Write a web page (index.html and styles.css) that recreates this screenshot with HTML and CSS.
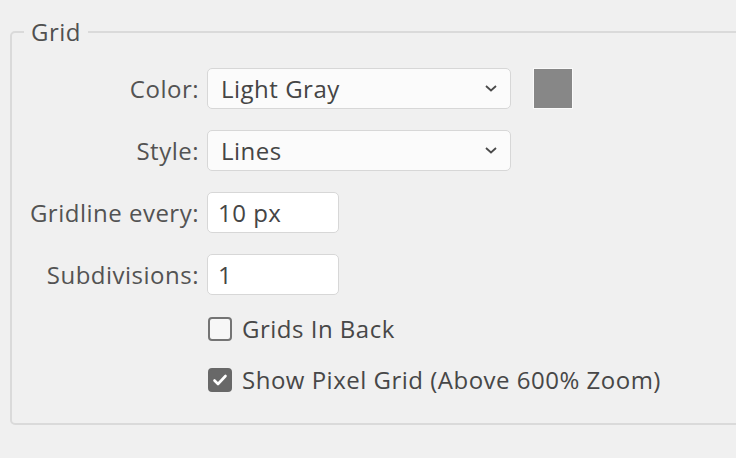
FILE: index.html
```html
<!DOCTYPE html>
<html>
<head>
<meta charset="utf-8">
<link rel="stylesheet" href="styles.css">
</head>
<body>
<fieldset class="group">
  <legend class="group-title">Grid</legend>
  <div class="form">
    <label class="field-label">Color:</label>
    <div class="field-row">
      <div class="dropdown">
        <span class="dropdown-value">Light Gray</span>
        <svg class="chevron" width="12" height="7" viewBox="0 0 12 7"><path d="M1 1 L6 5.5 L11 1" fill="none" stroke="#4a4a4a" stroke-width="1.8"/></svg>
      </div>
      <div class="swatch"></div>
    </div>

    <label class="field-label">Style:</label>
    <div class="field-row">
      <div class="dropdown">
        <span class="dropdown-value">Lines</span>
        <svg class="chevron" width="12" height="7" viewBox="0 0 12 7"><path d="M1 1 L6 5.5 L11 1" fill="none" stroke="#4a4a4a" stroke-width="1.8"/></svg>
      </div>
    </div>

    <label class="field-label">Gridline every:</label>
    <div class="field-row">
      <div class="textbox">10 px</div>
    </div>

    <label class="field-label">Subdivisions:</label>
    <div class="field-row">
      <div class="textbox">1</div>
    </div>
  </div>

  <div class="checks">
    <div class="check-row">
      <span class="box"></span>
      <span class="check-label">Grids In Back</span>
    </div>
    <div class="check-row">
      <span class="box checked">
        <svg width="16" height="14" viewBox="0 0 16 14"><path d="M2.5 7.5 L6 11 L13.5 3" fill="none" stroke="#ffffff" stroke-width="2.6" stroke-linecap="round" stroke-linejoin="round"/></svg>
      </span>
      <span class="check-label">Show Pixel Grid (Above 600% Zoom)</span>
    </div>
  </div>
</fieldset>
</body>
</html>
```

FILE: styles.css
```css
html, body {
  margin: 0;
  padding: 0;
  overflow: hidden;
}
body {
  background: #f0f0f0;
  font-family: "Open Sans", "Noto Sans", sans-serif;
  font-size: 24px;
  letter-spacing: 0.5px;
  color: #4e4e4e;
  width: 736px;
  height: 458px;
}
.group {
  margin: 20px -20px 0 10px;
  padding: 0 0 31px 0;
  border: 2px solid #dadada;
  border-radius: 5px;
  min-width: 0;
}
.group-title {
  margin-left: 12px;
  padding: 0 7px;
  font-size: 24px;
  line-height: 24px;
  color: #505050;
}
.form {
  display: grid;
  grid-template-columns: 187px auto;
  column-gap: 8px;
  row-gap: 21px;
  margin-top: 24px;
}
.field-label {
  text-align: right;
  align-self: center;
  color: #535353;
  white-space: nowrap;
}
.field-row {
  display: flex;
  align-items: center;
  gap: 22px;
  height: 41px;
}
.dropdown {
  box-sizing: border-box;
  width: 304px;
  height: 41px;
  display: flex;
  align-items: center;
  justify-content: space-between;
  padding: 0 13px 0 13px;
  background: #fbfbfb;
  border: 1.5px solid #d7d7d7;
  border-radius: 5px;
  color: #454545;
}
.chevron {
  display: block;
}
.swatch {
  box-sizing: border-box;
  width: 40px;
  height: 41px;
  background: #878787;
  border: 1px solid #fafafa;
}
.textbox {
  box-sizing: border-box;
  width: 132px;
  height: 41px;
  display: flex;
  align-items: center;
  padding-left: 10px;
  background: #ffffff;
  border: 1.5px solid #d7d7d7;
  border-radius: 5px;
  color: #454545;
}
.checks {
  display: flex;
  flex-direction: column;
  gap: 26px;
  margin-top: 21px;
  padding-left: 196px;
}
.check-row {
  display: flex;
  align-items: center;
  gap: 10px;
  height: 25px;
}
.box {
  box-sizing: border-box;
  width: 24px;
  height: 24px;
  border: 2px solid #747474;
  border-radius: 4px;
  background: #f7f7f7;
  display: flex;
  align-items: center;
  justify-content: center;
}
.box.checked {
  background: #686868;
  border-color: #686868;
}
.check-label {
  color: #474747;
  white-space: nowrap;
}
```
